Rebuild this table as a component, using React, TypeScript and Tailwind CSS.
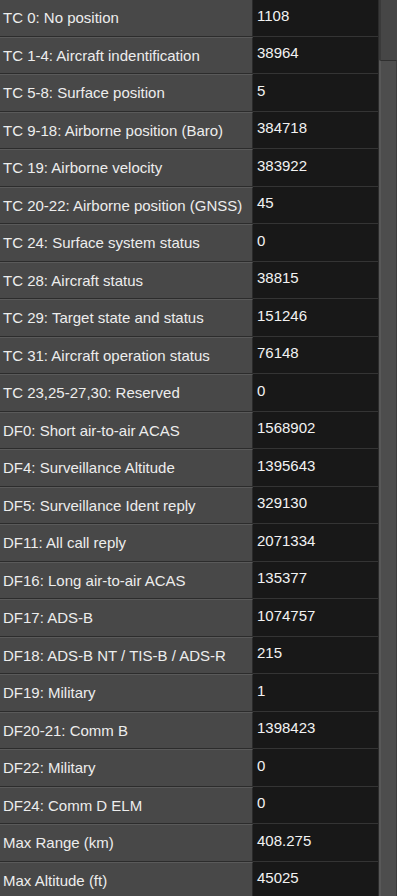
const stats: [string, string][] = [
  ['TC 0: No position', '1108'],
  ['TC 1-4: Aircraft indentification', '38964'],
  ['TC 5-8: Surface position', '5'],
  ['TC 9-18: Airborne position (Baro)', '384718'],
  ['TC 19: Airborne velocity', '383922'],
  ['TC 20-22: Airborne position (GNSS)', '45'],
  ['TC 24: Surface system status', '0'],
  ['TC 28: Aircraft status', '38815'],
  ['TC 29: Target state and status', '151246'],
  ['TC 31: Aircraft operation status', '76148'],
  ['TC 23,25-27,30: Reserved', '0'],
  ['DF0: Short air-to-air ACAS', '1568902'],
  ['DF4: Surveillance Altitude', '1395643'],
  ['DF5: Surveillance Ident reply', '329130'],
  ['DF11: All call reply', '2071334'],
  ['DF16: Long air-to-air ACAS', '135377'],
  ['DF17: ADS-B', '1074757'],
  ['DF18: ADS-B NT / TIS-B / ADS-R', '215'],
  ['DF19: Military', '1'],
  ['DF20-21: Comm B', '1398423'],
  ['DF22: Military', '0'],
  ['DF24: Comm D ELM', '0'],
  ['Max Range (km)', '408.275'],
  ['Max Altitude (ft)', '45025'],
]

export default function App() {
  return (
    <div
      className="flex h-[896px] w-[397px] overflow-hidden bg-[#181818] text-[15px] text-[#ededed]"
      style={{ fontFamily: '"Liberation Sans", Arial, sans-serif' }}
    >
      <div className="-mt-[1px] flex w-[379px] flex-col border-r border-[#2c2c2c]">
        {stats.map(([label, value]) => (
          <div key={label} className="flex h-[37.5px] shrink-0">
            <div className="flex w-[253px] shrink-0 items-center border-t border-r border-b border-t-[#5a5a5a] border-r-[#2a2a2a] border-b-[#2c2c2c] bg-[#484848] pt-[1px] pl-[3px] whitespace-nowrap">
              {label}
            </div>
            <div className="flex flex-1 items-center border-b border-[#343434] bg-[#181818] pb-[3px] pl-[4px] text-[#f2f2f2]">
              {value}
            </div>
          </div>
        ))}
      </div>
      <div className="flex w-[18px] flex-col bg-[#444444]">
        <div className="h-[60px] shrink-0 border-l-[2px] border-[#3a3a3a] bg-[#464646]" />
        <div className="flex-1 border-t border-l-[2px] border-r border-t-[#2f2f2f] border-l-[#585858] border-r-[#3c3c3c] bg-[#4d4d4d]" />
      </div>
    </div>
  )
}
